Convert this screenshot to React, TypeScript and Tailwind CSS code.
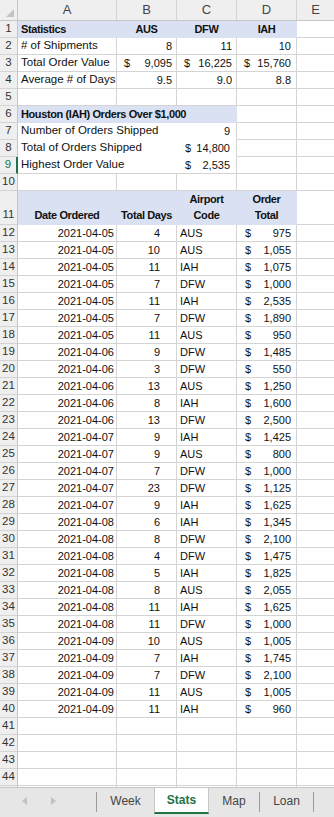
import React from "react";

const rows: [string, number, string, string][] = [
  ["2021-04-05", 4, "AUS", "975"],
  ["2021-04-05", 10, "AUS", "1,055"],
  ["2021-04-05", 11, "IAH", "1,075"],
  ["2021-04-05", 7, "DFW", "1,000"],
  ["2021-04-05", 11, "IAH", "2,535"],
  ["2021-04-05", 7, "DFW", "1,890"],
  ["2021-04-05", 11, "AUS", "950"],
  ["2021-04-06", 9, "DFW", "1,485"],
  ["2021-04-06", 3, "DFW", "550"],
  ["2021-04-06", 13, "AUS", "1,250"],
  ["2021-04-06", 8, "IAH", "1,600"],
  ["2021-04-06", 13, "DFW", "2,500"],
  ["2021-04-07", 9, "IAH", "1,425"],
  ["2021-04-07", 9, "AUS", "800"],
  ["2021-04-07", 7, "DFW", "1,000"],
  ["2021-04-07", 23, "DFW", "1,125"],
  ["2021-04-07", 9, "IAH", "1,625"],
  ["2021-04-08", 6, "IAH", "1,345"],
  ["2021-04-08", 8, "DFW", "2,100"],
  ["2021-04-08", 4, "DFW", "1,475"],
  ["2021-04-08", 5, "IAH", "1,825"],
  ["2021-04-08", 8, "AUS", "2,055"],
  ["2021-04-08", 11, "IAH", "1,625"],
  ["2021-04-08", 11, "DFW", "1,000"],
  ["2021-04-09", 10, "AUS", "1,005"],
  ["2021-04-09", 7, "IAH", "1,745"],
  ["2021-04-09", 7, "DFW", "2,100"],
  ["2021-04-09", 11, "AUS", "1,005"],
  ["2021-04-09", 11, "IAH", "960"],
];

const G = "border-r border-b border-[#d4d4d4]";
const F = "border-r border-b border-[#d9e1f2] bg-[#d9e1f2]";
const base = "shrink-0 flex items-center overflow-visible whitespace-nowrap";
const num = "text-[11px]";
const lab = "text-[11.5px]";
const bold = "text-[11px] font-bold tracking-[-0.4px]";

function RH({ n, sel }: { n?: number; sel?: boolean }) {
  return (
    <div
      className={`w-[18px] shrink-0 flex items-center justify-center bg-[#efefef] border-b border-[#d4d4d4] text-[11.5px] ${
        sel
          ? "border-r-2 border-r-[#217346] text-[#217346]"
          : "border-r border-r-[#c6c6c6] text-[#333]"
      }`}
    >
      {n}
    </div>
  );
}

function Acc({ v, cls }: { v: string; cls: string }) {
  return (
    <div className={`${base} ${cls} justify-between ${num}`}>
      <span>$</span>
      <span>{v}</span>
    </div>
  );
}

function EmptyRow({ n }: { n?: number }) {
  return (
    <div className="flex h-[17px]">
      <RH n={n} />
      <div className={`${base} w-[99px] ${G}`} />
      <div className={`${base} w-[60px] ${G}`} />
      <div className={`${base} w-[60px] ${G}`} />
      <div className={`${base} w-[60px] ${G}`} />
      <div className={`${base} flex-1 border-b border-[#d4d4d4]`} />
    </div>
  );
}

function ColHead({ l, w }: { l: string; w: string }) {
  return (
    <div
      className={`${w} shrink-0 flex items-center justify-center border-r border-[#d4d4d4] text-[13px] text-[#444]`}
    >
      {l}
    </div>
  );
}

export default function App() {
  return (
    <div className="w-[334px] h-[817px] flex flex-col overflow-hidden bg-white text-[#111] font-['Liberation_Sans',Arial,sans-serif]">
      <div className="flex-1 min-h-0 overflow-hidden">
        {/* column headers */}
        <div className="flex h-[21px] bg-[#efefef] border-b border-[#c6c6c6]">
          <div className="w-[18px] shrink-0 border-r border-[#c6c6c6] flex items-end justify-end pr-[3px] pb-[3px]">
            <svg width="8" height="8" viewBox="0 0 8 8">
              <polygon points="8,0 8,8 0,8" fill="#c3c3c3" />
            </svg>
          </div>
          <ColHead l="A" w="w-[99px]" />
          <ColHead l="B" w="w-[60px]" />
          <ColHead l="C" w="w-[60px]" />
          <ColHead l="D" w="w-[60px]" />
          <div className="flex-1 flex items-center justify-center text-[13px] text-[#444]">E</div>
        </div>

        {/* row 1 */}
        <div className="flex h-[17px]">
          <RH n={1} />
          <div className={`${base} w-[99px] ${F} pl-[3px] ${bold}`}>Statistics</div>
          <div className={`${base} w-[60px] ${F} justify-center ${bold}`}>AUS</div>
          <div className={`${base} w-[60px] ${F} justify-center ${bold}`}>DFW</div>
          <div className={`${base} w-[60px] ${F} justify-center ${bold}`}>IAH</div>
          <div className={`${base} flex-1 border-b border-[#d4d4d4]`} />
        </div>
        {/* row 2 */}
        <div className="flex h-[17px]">
          <RH n={2} />
          <div className={`${base} w-[99px] ${G} pl-[3px] ${lab}`}># of Shipments</div>
          <div className={`${base} w-[60px] ${G} justify-end pr-[4px] ${num}`}>8</div>
          <div className={`${base} w-[60px] ${G} justify-end pr-[4px] ${num}`}>11</div>
          <div className={`${base} w-[60px] ${G} justify-end pr-[5px] ${num}`}>10</div>
          <div className={`${base} flex-1 border-b border-[#d4d4d4]`} />
        </div>
        {/* row 3 */}
        <div className="flex h-[17px]">
          <RH n={3} />
          <div className={`${base} w-[99px] ${G} pl-[3px] ${lab}`}>Total Order Value</div>
          <Acc v="9,095" cls={`w-[60px] ${G} pl-[7px] pr-[4px]`} />
          <Acc v="16,225" cls={`w-[60px] ${G} pl-[7px] pr-[4px]`} />
          <Acc v="15,760" cls={`w-[60px] ${G} pl-[7px] pr-[5px]`} />
          <div className={`${base} flex-1 border-b border-[#d4d4d4]`} />
        </div>
        {/* row 4 */}
        <div className="flex h-[17px]">
          <RH n={4} />
          <div className={`${base} w-[99px] ${G} pl-[3px] ${lab}`}>Average # of Days</div>
          <div className={`${base} w-[60px] ${G} justify-end pr-[4px] ${num}`}>9.5</div>
          <div className={`${base} w-[60px] ${G} justify-end pr-[4px] ${num}`}>9.0</div>
          <div className={`${base} w-[60px] ${G} justify-end pr-[5px] ${num}`}>8.8</div>
          <div className={`${base} flex-1 border-b border-[#d4d4d4]`} />
        </div>
        <EmptyRow n={5} />
        {/* row 6 */}
        <div className="flex h-[17px]">
          <RH n={6} />
          <div className={`${base} w-[219px] ${F} pl-[3px] ${bold}`}>Houston (IAH) Orders Over $1,000</div>
          <div className={`${base} w-[60px] ${G}`} />
          <div className={`${base} flex-1 border-b border-[#d4d4d4]`} />
        </div>
        {/* row 7 */}
        <div className="flex h-[17px]">
          <RH n={7} />
          <div className={`${base} w-[159px] border-b border-white pl-[3px] ${lab}`}>Number of Orders Shipped</div>
          <div className={`${base} w-[60px] border-r border-r-[#d4d4d4] border-b border-b-white justify-end pr-[6px] ${num}`}>9</div>
          <div className={`${base} w-[60px] ${G}`} />
          <div className={`${base} flex-1 border-b border-[#d4d4d4]`} />
        </div>
        {/* row 8 */}
        <div className="flex h-[17px]">
          <RH n={8} />
          <div className={`${base} w-[159px] border-b border-white pl-[3px] ${lab}`}>Total of Orders Shipped</div>
          <Acc v="14,800" cls={`w-[60px] border-r border-r-[#d4d4d4] border-b border-b-white pl-[8px] pr-[6px]`} />
          <div className={`${base} w-[60px] ${G}`} />
          <div className={`${base} flex-1 border-b border-[#d4d4d4]`} />
        </div>
        {/* row 9 */}
        <div className="flex h-[17px]">
          <RH n={9} sel />
          <div className={`${base} w-[159px] border-b border-[#d4d4d4] pl-[3px] ${lab}`}>Highest Order Value</div>
          <Acc v="2,535" cls={`w-[60px] ${G} pl-[8px] pr-[6px]`} />
          <div className={`${base} w-[60px] ${G}`} />
          <div className={`${base} flex-1 border-b border-[#d4d4d4]`} />
        </div>
        <EmptyRow n={10} />
        {/* row 11 */}
        <div className="flex h-[34px]">
          <div className="w-[18px] shrink-0 flex items-end justify-center pb-[1px] bg-[#efefef] border-b border-[#d4d4d4] border-r border-r-[#c6c6c6] text-[11.5px] text-[#333]">
            11
          </div>
          <div className={`shrink-0 w-[99px] ${F} flex items-end justify-center text-center leading-[16px] pb-[1px] ${bold}`}>
            Date Ordered
          </div>
          <div className={`shrink-0 w-[60px] ${F} flex items-end justify-center text-center leading-[16px] pb-[1px] ${bold}`}>
            Total Days
          </div>
          <div className={`shrink-0 w-[60px] ${F} flex items-end justify-center text-center leading-[16px] pb-[1px] ${bold}`}>
            <div>
              Airport
              <br />
              Code
            </div>
          </div>
          <div className={`shrink-0 w-[60px] ${F} flex items-end justify-center text-center leading-[16px] pb-[1px] ${bold}`}>
            <div>
              Order
              <br />
              Total
            </div>
          </div>
          <div className="flex-1 border-b border-[#d4d4d4]" />
        </div>
        {rows.map((r, i) => (
          <div key={i} className="flex h-[17px]">
            <RH n={12 + i} />
            <div className={`${base} w-[99px] ${G} justify-end pr-[2px] ${num}`}>{r[0]}</div>
            <div className={`${base} w-[60px] ${G} justify-end pr-[16px] ${num}`}>{r[1]}</div>
            <div className={`${base} w-[60px] ${G} pl-[3px] ${num}`}>{r[2]}</div>
            <Acc v={r[3]} cls={`w-[60px] ${G} pl-[8px] pr-[5px]`} />
            <div className={`${base} flex-1 border-b border-[#d4d4d4]`} />
          </div>
        ))}
        {[41, 42, 43, 44].map((n) => (
          <EmptyRow key={n} n={n} />
        ))}
        <EmptyRow />
      </div>

      {/* sheet tabs */}
      <div className="h-[30px] shrink-0 bg-[#e6e6e6] border-t border-[#c6c6c6] flex items-start">
        <div className="w-[96px] h-[25px] flex items-center">
          <svg width="5" height="8" viewBox="0 0 5 8" className="ml-[22px]">
            <polygon points="5,0 5,8 0,4" fill="#c2c2c2" />
          </svg>
          <svg width="5" height="8" viewBox="0 0 5 8" className="ml-[24px]">
            <polygon points="0,0 0,8 5,4" fill="#c2c2c2" />
          </svg>
        </div>
        <div className="w-px h-[20px] mt-[4px] bg-[#9b9b9b]" />
        <div className="w-[57px] h-[25px] flex items-center justify-center text-[12px] text-[#444]">Week</div>
        <div className="w-[55px] h-[26px] flex items-center justify-center bg-white border-x border-[#c6c6c6] border-b-2 border-b-[#217346] text-[12px] font-bold text-[#217346]">
          Stats
        </div>
        <div className="w-[50px] h-[25px] flex items-center justify-center text-[12px] text-[#444]">Map</div>
        <div className="w-px h-[20px] mt-[4px] bg-[#9b9b9b]" />
        <div className="w-[53px] h-[25px] flex items-center justify-center text-[12px] text-[#444]">Loan</div>
        <div className="w-px h-[20px] mt-[4px] bg-[#9b9b9b]" />
      </div>
    </div>
  );
}
